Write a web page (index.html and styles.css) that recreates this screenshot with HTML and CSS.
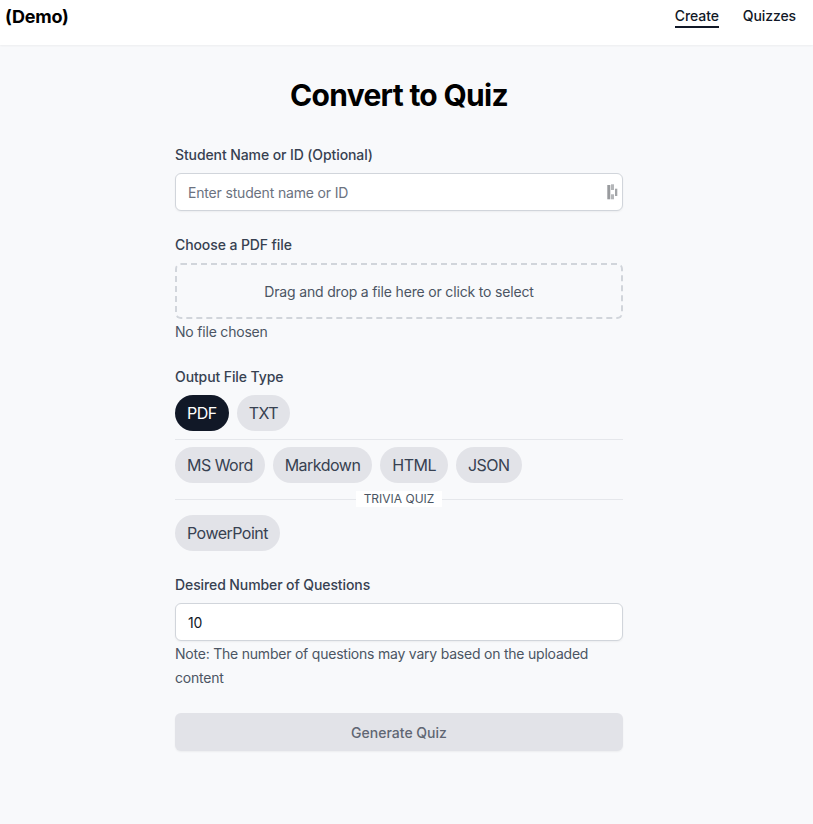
FILE: index.html
```html
<!DOCTYPE html>
<html lang="en">
<head>
<meta charset="utf-8">
<title>Convert to Quiz</title>
<link rel="stylesheet" href="styles.css">
</head>
<body>
<header class="topbar">
  <div class="brand">(Demo)</div>
  <nav class="nav">
    <a class="nav-link active">Create</a>
    <a class="nav-link">Quizzes</a>
  </nav>
</header>
<main class="main">
  <h1 class="title">Convert to Quiz</h1>
  <form class="form">
    <div class="field field-name">
      <label class="label">Student Name or ID (Optional)</label>
      <div class="input-wrap">
        <input class="input" type="text" placeholder="Enter student name or ID">
        <svg class="input-icon" width="12" height="16" viewBox="0 0 12 16" aria-hidden="true">
          <rect x="0.3" y="1" width="3" height="14.3" fill="#999b9e"/>
          <rect x="4" y="0.3" width="3" height="5.7" fill="#b4b6b9"/>
          <rect x="4" y="10.3" width="3" height="5" fill="#b4b6b9"/>
          <rect x="8" y="4.7" width="2.3" height="7.3" fill="#a3a5a8"/>
        </svg>
      </div>
    </div>
    <div class="field field-file">
      <label class="label">Choose a PDF file</label>
      <div class="dropzone">Drag and drop a file here or click to select</div>
      <p class="hint">No file chosen</p>
    </div>
    <div class="field field-type">
      <label class="label">Output File Type</label>
      <div class="pills">
        <span class="pill selected">PDF</span>
        <span class="pill">TXT</span>
      </div>
      <div class="rule"></div>
      <div class="pills">
        <span class="pill">MS Word</span>
        <span class="pill">Markdown</span>
        <span class="pill">HTML</span>
        <span class="pill">JSON</span>
      </div>
      <div class="rule rule-labelled"><span class="rule-text">TRIVIA QUIZ</span></div>
      <div class="pills">
        <span class="pill">PowerPoint</span>
      </div>
    </div>
    <div class="field field-count">
      <label class="label">Desired Number of Questions</label>
      <input class="input" type="text" value="10">
      <p class="note">Note: The number of questions may vary based on the uploaded content</p>
    </div>
    <button class="submit" type="button" disabled>Generate Quiz</button>
  </form>
</main>
</body>
</html>
```
FILE: styles.css
```css
* { box-sizing: border-box; }
html, body { margin: 0; padding: 0; }
body {
  font-family: Inter, "Liberation Sans", sans-serif;
  background: #f8f9fb;
  color: #111827;
  min-height: 824px;
}
.topbar {
  height: 45px;
  background: #fff;
  box-shadow: 0 1px 2px rgba(0,0,0,.05);
  display: flex;
  justify-content: space-between;
  align-items: flex-start;
  padding: 0 17px 0 5px;
}
.brand {
  font-size: 18px;
  font-weight: 700;
  line-height: 24px;
  padding-top: 5px;
  color: #000;
  letter-spacing: -0.2px;
}
.nav { display: flex; gap: 24px; padding-top: 5px; }
.nav-link {
  font-size: 14px;
  font-weight: 500;
  line-height: 20px;
  padding: 1px 0 1px;
  height: 23px;
  color: #111827;
  letter-spacing: -0.1px;
  border-bottom: 2px solid transparent;
}
.nav-link.active { border-bottom-color: #111827; }
.main { display: flex; flex-direction: column; align-items: center; padding: 32px 15px 0 0; }
.title {
  margin: 0 0 32px;
  font-size: 30px;
  line-height: 36px;
  font-weight: 700;
  color: #000;
  letter-spacing: -0.7px;
}
.form { width: 448px; display: flex; flex-direction: column; }
.field { display: flex; flex-direction: column; }
.field-name, .field-type { margin-bottom: 24px; }
.field-file { margin-bottom: 25px; }
.field-count { margin-bottom: 23px; }
.label {
  display: block;
  font-size: 14px;
  font-weight: 500;
  line-height: 20px;
  color: #374151;
  margin-bottom: 8px;
  letter-spacing: -0.1px;
}
.input-wrap { position: relative; }
.input {
  display: block;
  width: 100%;
  height: 38px;
  padding: 0 12px;
  font-family: inherit;
  font-size: 14px;
  letter-spacing: -0.17px;
  color: #111827;
  background: #fff;
  border: 1px solid #d1d5db;
  border-radius: 6px;
  box-shadow: 0 1px 2px rgba(0,0,0,.05);
  outline: none;
}
.input::placeholder { color: #6b7280; opacity: 1; }
.input-icon { position: absolute; right: 4px; top: 11px; }
.dropzone {
  height: 56px;
  display: flex;
  align-items: center;
  justify-content: center;
  font-size: 14px;
  letter-spacing: -0.17px;
  color: #4b5563;
  border: 2px dashed #d1d5db;
  border-radius: 6px;
}
.hint { margin: 3px 0 0; font-size: 14px; line-height: 20px; color: #4b5563; letter-spacing: -0.2px; }
.pills { display: flex; gap: 8px; }
.pill {
  height: 36px;
  padding: 0 12px;
  display: flex;
  align-items: center;
  border-radius: 18px;
  background: #e2e3e8;
  color: #374151;
  font-size: 16px;
  line-height: 24px;
  letter-spacing: -0.52px;
}
.pill.selected { background: #111827; color: #fff; }
.rule { height: 1px; background: #e5e7eb; margin: 8px 0 7px; }
.rule-labelled {
  position: relative;
  margin: 16px 0 15px;
  display: flex;
  justify-content: center;
  align-items: center;
}
.rule-text {
  background: #fff;
  padding: 0 8px;
  font-size: 12px;
  line-height: 16px;
  color: #4b5563;
  position: absolute;
  top: -8px;
}
.note { margin: 1px 0 0; font-size: 14px; line-height: 24px; color: #4b5563; letter-spacing: -0.22px; }
.submit {
  height: 38px;
  border: 0;
  border-radius: 6px;
  background: #e2e3e8;
  color: #5f6673;
  font-family: inherit;
  font-size: 14px;
  font-weight: 500;
  box-shadow: 0 1px 2px rgba(0,0,0,.05);
}
```
